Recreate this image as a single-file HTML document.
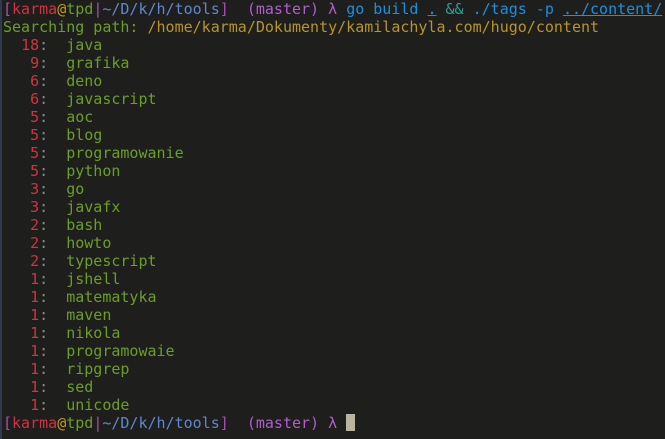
<!DOCTYPE html>
<html><head><meta charset="utf-8"><style>
html,body{margin:0;padding:0;background:#1e1e1c;width:665px;height:439px;overflow:hidden}
.b{position:absolute;left:0;top:0;width:2px;height:439px;background:#2f3b4a}
pre{margin:0;position:absolute;left:3px;top:0;font-family:"DejaVu Sans Mono","Liberation Mono",monospace;font-size:15px;line-height:18px;color:#b0b0a8}
.m{color:#a64fb5}.r{color:#d0333f}.y{color:#c29a1e}.g{color:#6a9e2a}.bl{color:#5f86d0}.p{color:#b15dd0}
.c{color:#1b8fe0}.t{color:#2aa198}.u{color:#1b8fe0;text-decoration:underline}.n{color:#d0343f}.k{color:#8a8a86}.yy{color:#b8952a}
.cur{display:inline-block;width:9px;height:17px;background:#b8b49e;vertical-align:-3px}
</style></head><body><div class="b"></div><pre><span class="m">[</span><span class="r">karma</span><span class="y">@</span><span class="g">tpd</span><span class="m">|</span><span class="bl">~/D/k/h/tools</span><span class="m">]</span>  <span class="p">(master) λ</span> <span class="c">go build</span> <span class="u">.</span> <span class="t">&amp;&amp;</span> <span class="c">./tags -p</span> <span class="u">../content/</span>
<span class="g">Searching path:</span> <span class="yy">/home/karma/Dokumenty/kamilachyla.com/hugo/content</span>
  <span class="n">18</span><span class="k">:</span>  <span class="g">java</span>
   <span class="n">9</span><span class="k">:</span>  <span class="g">grafika</span>
   <span class="n">6</span><span class="k">:</span>  <span class="g">deno</span>
   <span class="n">6</span><span class="k">:</span>  <span class="g">javascript</span>
   <span class="n">5</span><span class="k">:</span>  <span class="g">aoc</span>
   <span class="n">5</span><span class="k">:</span>  <span class="g">blog</span>
   <span class="n">5</span><span class="k">:</span>  <span class="g">programowanie</span>
   <span class="n">5</span><span class="k">:</span>  <span class="g">python</span>
   <span class="n">3</span><span class="k">:</span>  <span class="g">go</span>
   <span class="n">3</span><span class="k">:</span>  <span class="g">javafx</span>
   <span class="n">2</span><span class="k">:</span>  <span class="g">bash</span>
   <span class="n">2</span><span class="k">:</span>  <span class="g">howto</span>
   <span class="n">2</span><span class="k">:</span>  <span class="g">typescript</span>
   <span class="n">1</span><span class="k">:</span>  <span class="g">jshell</span>
   <span class="n">1</span><span class="k">:</span>  <span class="g">matematyka</span>
   <span class="n">1</span><span class="k">:</span>  <span class="g">maven</span>
   <span class="n">1</span><span class="k">:</span>  <span class="g">nikola</span>
   <span class="n">1</span><span class="k">:</span>  <span class="g">programowaie</span>
   <span class="n">1</span><span class="k">:</span>  <span class="g">ripgrep</span>
   <span class="n">1</span><span class="k">:</span>  <span class="g">sed</span>
   <span class="n">1</span><span class="k">:</span>  <span class="g">unicode</span>
<span class="m">[</span><span class="r">karma</span><span class="y">@</span><span class="g">tpd</span><span class="m">|</span><span class="bl">~/D/k/h/tools</span><span class="m">]</span>  <span class="p">(master) λ</span> <span class="cur"></span></pre></body></html>
